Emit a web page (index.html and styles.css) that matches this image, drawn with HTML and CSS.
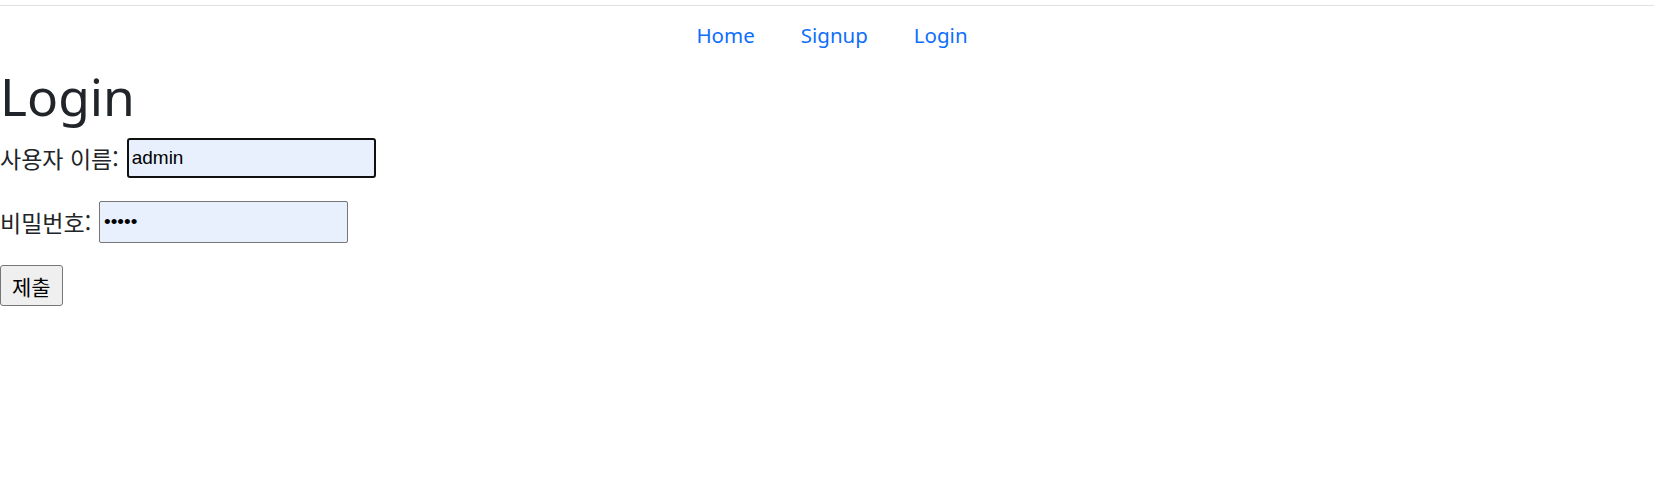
FILE: index.html
```html
<!DOCTYPE html>
<html lang="ko">
<head>
<meta charset="utf-8">
<title>Login</title>
<link rel="stylesheet" href="styles.css">
</head>
<body>
<div class="topline"></div>
<nav class="nav">
  <a class="nav-link" href="#">Home</a>
  <a class="nav-link" href="#">Signup</a>
  <a class="nav-link" href="#">Login</a>
</nav>
<main class="content">
  <h1 class="title">Login</h1>
  <form class="form">
    <div class="row">
      <label class="label" for="username">사용자 이름:</label>
      <input class="field field-focus" id="username" type="text" value="admin">
    </div>
    <div class="row row-second">
      <label class="label" for="password">비밀번호:</label>
      <input class="field" id="password" type="password" value="admin">
    </div>
    <div class="row">
      <button class="submit" type="button">제출</button>
    </div>
  </form>
</main>
</body>
</html>
```

FILE: styles.css
```css
html, body {
  margin: 0;
  padding: 0;
  background: #ffffff;
}

body {
  font-family: "Noto Sans", "Noto Sans CJK KR", sans-serif;
  color: #212529;
}

.topline {
  height: 5px;
  border-bottom: 1px solid #dee2e6;
}

.nav {
  display: flex;
  justify-content: center;
  height: 58px;
  align-items: center;
  padding-left: 10px;
}

.nav-link {
  color: #0d6efd;
  text-decoration: none;
  font-size: 20.5px;
  line-height: 36px;
  padding: 0 23px;
}

.content {
  padding: 0;
}

.title {
  margin: 0 0 10px 0;
  font-family: "Noto Sans", sans-serif;
  font-weight: 400;
  font-size: 51.5px;
  line-height: 64px;
  color: #212529;
}

.form {
  display: flex;
  flex-direction: column;
  gap: 22px;
}

.row {
  display: flex;
  align-items: center;
  gap: 8px;
}

.row-second {
  margin-top: 1px;
}

.label {
  font-family: "Noto Sans CJK KR", sans-serif;
  font-size: 23px;
  color: #212529;
}

.field {
  box-sizing: border-box;
  width: 249px;
  height: 42px;
  border: 1px solid #767676;
  border-radius: 2px;
  background: #e8f0fe;
  padding: 0 4px;
  font-family: "Liberation Sans", Arial, sans-serif;
  font-size: 19px;
  color: #000000;
  outline: none;
}

.field-focus {
  border: 2px solid #101010;
  border-radius: 3px;
  padding: 0 3px;
  height: 40px;
}

.submit {
  box-sizing: border-box;
  height: 41px;
  padding: 0 11px;
  border: 1px solid #767676;
  border-radius: 3px;
  background: #efefef;
  font-family: "Noto Sans CJK KR", sans-serif;
  font-size: 21px;
  color: #000000;
}
```
